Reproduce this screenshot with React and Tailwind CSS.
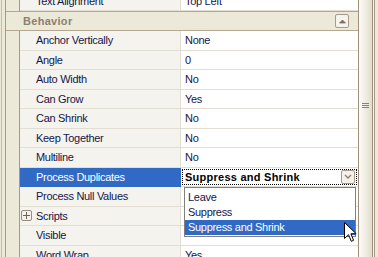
import React from 'react';

const rows = [
  { label: 'Anchor Vertically', value: 'None' },
  { label: 'Angle', value: '0' },
  { label: 'Auto Width', value: 'No' },
  { label: 'Can Grow', value: 'Yes' },
  { label: 'Can Shrink', value: 'No' },
  { label: 'Keep Together', value: 'No' },
  { label: 'Multiline', value: 'No' },
  { label: 'Process Duplicates', value: 'Suppress and Shrink', selected: true },
  { label: 'Process Null Values', value: '' },
  { label: 'Scripts', value: '', expandable: true },
  { label: 'Visible', value: '' },
  { label: 'Word Wrap', value: 'Yes' },
];

const Row = ({ label, value, selected, expandable }) => (
  <div className="flex h-[19.5px] shrink-0">
    <div className="w-[14px] shrink-0 border-r border-[#a39a8a] bg-[#ece9d8]" />
    <div
      className={
        selected
          ? 'flex w-[161px] shrink-0 items-center bg-[#316ac5] text-white'
          : 'flex w-[161px] shrink-0 items-center border-b border-r border-[#e2ded3] bg-[#f4f3ee] text-[#16164a]'
      }
    >
      {expandable ? (
        <div className="ml-[1px] mr-[4px] flex h-[11px] w-[11px] items-center justify-center rounded-[2px] border border-[#9a8c7c] bg-[#f4f2ea]">
          <svg width="7" height="7" viewBox="0 0 7 7">
            <path d="M0 3.5H7M3.5 0V7" stroke="#6e6252" strokeWidth="1" />
          </svg>
        </div>
      ) : (
        <div className="w-[16px] shrink-0" />
      )}
      <span className="whitespace-nowrap">{label}</span>
    </div>
    {selected ? (
      <div className="flex w-[177px] shrink-0 border-b border-[#e2ded3] bg-white p-[1px]">
        <div className="flex flex-1 items-center justify-between border border-dotted border-black pl-[2px] pr-[1px]">
          <span className="whitespace-nowrap font-bold tracking-[0.25px] text-black">{value}</span>
          <div className="flex h-[14px] w-[14px] items-center justify-center rounded-[2px] border border-[#a8998a] bg-[#f3f1ea]">
            <svg width="8" height="5" viewBox="0 0 8 5">
              <path d="M1 1L4 4L7 1" stroke="#8a7c6a" strokeWidth="1.3" fill="none" />
            </svg>
          </div>
        </div>
      </div>
    ) : (
      <div className="flex w-[177px] shrink-0 items-center border-b border-[#e2ded3] bg-white pl-[4px] text-[#16164a]">
        <span className="whitespace-nowrap">{value}</span>
      </div>
    )}
  </div>
);

export default function App() {
  return (
    <div className="relative flex h-[257px] w-[378px] overflow-hidden bg-[#ece9d8] font-['Liberation_Sans',Arial,sans-serif] text-[11px] tracking-[-0.3px]">
      <div className="w-[6px] shrink-0 border-r border-[#a39a8a] pl-[1px]">
        <div className="h-full w-[1px] bg-[#c4bbab]" />
      </div>

      <div className="flex w-[353px] shrink-0 flex-col border-r border-[#9d8e7e]">
        <div className="mt-[-8.5px]">
          <Row label="Text Alignment" value="Top Left" />
        </div>
        <div className="flex h-[20px] shrink-0 items-center justify-between border-y border-[#b3a794] bg-[#ece9d8] pl-[17px] pr-[9px]">
          <span className="font-bold tracking-[0.3px] text-[#8b8170]">Behavior</span>
          <div className="flex h-[14px] w-[14px] items-center justify-center rounded-[2px] border border-[#a8998a] bg-[#f5f3ec]">
            <svg width="7" height="5" viewBox="0 0 7 5">
              <path d="M0.5 4L3.5 1L6.5 4Z" fill="#7d705f" stroke="#7d705f" strokeWidth="0.8" />
            </svg>
          </div>
        </div>
        {rows.map((r) => (
          <Row key={r.label} {...r} />
        ))}
      </div>

      <div className="flex w-[19px] shrink-0">
        <div className="flex w-[14px] flex-col items-center border-r border-[#9d8e7e] bg-gradient-to-r from-[#fdfcf9] to-[#e4ddcb] pt-[103px]">
          <div className="mb-[1px] h-[1px] w-[7px] bg-[#8d8170]" />
          <div className="mb-[1px] h-[1px] w-[7px] bg-[#8d8170]" />
          <div className="h-[1px] w-[7px] bg-[#8d8170]" />
        </div>
        <div className="w-[1px] bg-[#f8f6f0]" />
        <div className="w-[1px] bg-[#a39a8a]" />
        <div className="flex-1 bg-[#ece9d8]" />
      </div>

      <div className="absolute left-[184px] top-[187px] flex h-[50px] w-[172px] flex-col border border-[#7f7f7f] bg-white pt-[2px] text-[#16164a]">
        <div className="flex h-[15px] items-center pl-[3px]">Leave</div>
        <div className="flex h-[15px] items-center pl-[3px]">Suppress</div>
        <div className="flex h-[15px] items-center bg-[#316ac5] pl-[3px] text-white">Suppress and Shrink</div>
      </div>

      <svg className="absolute left-[344px] top-[222px]" width="13" height="21" viewBox="0 0 13 21">
        <path
          d="M0.5 0.5L0.5 16.5L4.5 12.7L7.3 19.3L9.6 18.3L6.9 11.8L12.2 11.8Z"
          fill="white"
          stroke="black"
          strokeWidth="1"
        />
      </svg>
    </div>
  );
}
